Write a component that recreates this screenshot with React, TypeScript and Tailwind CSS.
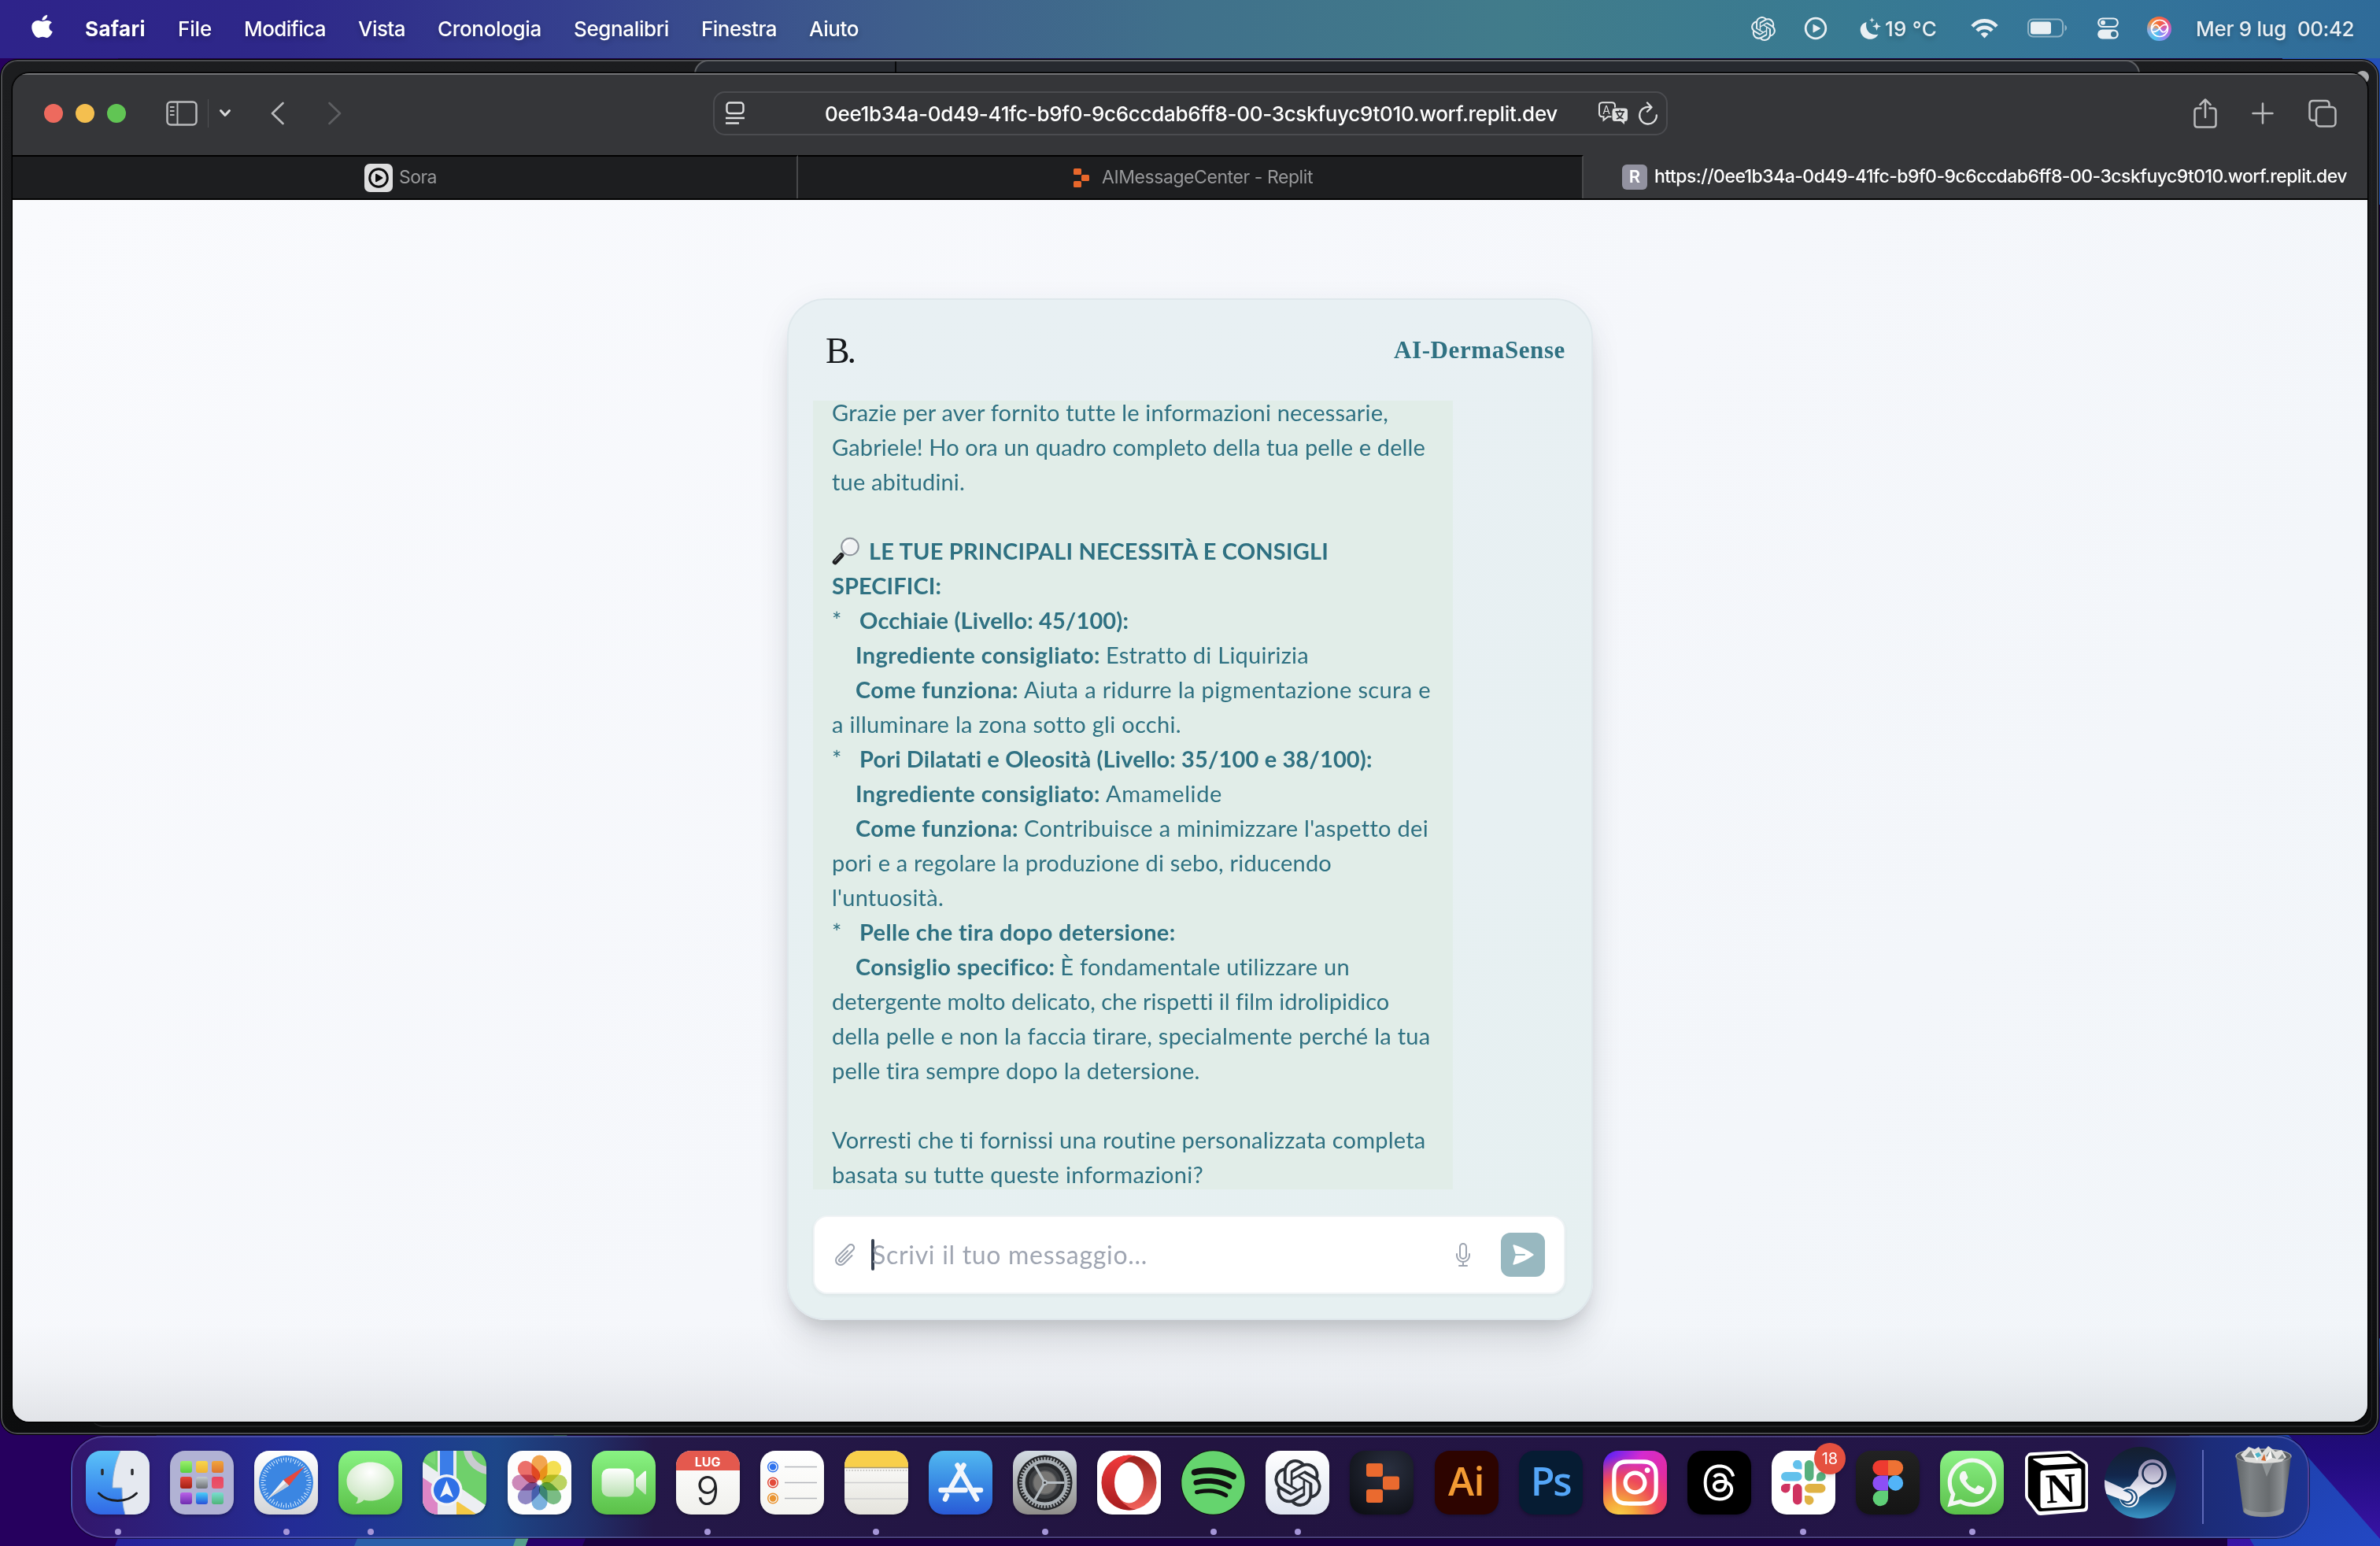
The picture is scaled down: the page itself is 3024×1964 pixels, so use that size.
import React, { useLayoutEffect, useRef, useState } from "react";
import { FaApple, FaInstagram, FaThreads, FaWhatsapp, FaSpotify } from "react-icons/fa6";
import { SiOpenai } from "react-icons/si";
import { HiOutlineMicrophone, HiOutlinePaperClip, HiPaperAirplane } from "react-icons/hi2";

/* Text whose tracking is adjusted so that it fills a given width. */
function Fit({ w, children, className = "" }: { w: number; children: string; className?: string }) {
  const ref = useRef<HTMLSpanElement>(null);
  const [spacing, setSpacing] = useState(0);
  useLayoutEffect(() => {
    const el = ref.current;
    if (!el) return;
    setSpacing((w - el.getBoundingClientRect().width) / children.length);
  }, [w, children]);
  return (
    <span ref={ref} className={`inline-block shrink-0 whitespace-pre ${className}`} style={{ letterSpacing: spacing }}>
      {children}
    </span>
  );
}

function Wallpaper() {
  return (
    <svg className="absolute inset-0" width="3024" height="1964" viewBox="0 0 3024 1964">
      <defs>
        <linearGradient id="wpL" x1="0" x2="1">
          <stop offset="0" stopColor="#27209a" />
          <stop offset="0.55" stopColor="#2438a0" />
          <stop offset="1" stopColor="#2a5faa" />
        </linearGradient>
        <linearGradient id="wpR" x1="0" y1="0" x2="1" y2="1">
          <stop offset="0" stopColor="#1c3da0" />
          <stop offset="1" stopColor="#2348c4" />
        </linearGradient>
        <linearGradient id="wpP" x1="0" y1="0" x2="0" y2="1">
          <stop offset="0" stopColor="#2450c0" />
          <stop offset="0.2" stopColor="#1a0a5c" />
          <stop offset="0.6" stopColor="#220c80" />
          <stop offset="1" stopColor="#3a14a8" />
        </linearGradient>
      </defs>
      <rect width="3024" height="1964" fill="#1a0140" />
      <rect width="150" height="1964" fill="#26005e" />
      <rect x="2900" y="60" width="124" height="200" fill="#2450b8" />
      <polygon points="200,1820 146,1964 660,1964 720,1820" fill="url(#wpL)" />
      <polygon points="510,1820 450,1964 660,1964 720,1820" fill="#2a5faa" />
      <polygon points="705,1820 652,1964 668,1964 722,1820" fill="#56a08c" />
      <polygon points="722,1820 668,1964 740,1964 800,1820" fill="#28006a" />
      <polygon points="2830,1820 3024,1700 3024,1964 2830,1964" fill="url(#wpP)" />
      <polygon points="2780,1820 2905,1820 3024,1955 3024,1964 2864,1964" fill="url(#wpR)" />
    </svg>
  );
}

function MenuBar() {
  return (
    <header className="relative flex h-[74px] items-center justify-between bg-[linear-gradient(90deg,#2e238a_0%,#2e2889_12%,#35408e_24%,#3f5f8c_38%,#40718b_50%,#417c8b_64%,#387a92_78%,#34759a_88%,#2f6b99_100%)] pb-0.5 pr-[33px] pl-[40px] text-[26px] font-medium text-white [text-shadow:0_3px_6px_rgba(0,0,0,0.25)]">
      <div className="flex items-center gap-[41px]">
        <FaApple className="-mt-1.5 h-[33px] w-[27px]" preserveAspectRatio="none" />
        <Fit w={77} className="font-bold">Safari</Fit>
        <Fit w={43}>File</Fit>
        <Fit w={104}>Modifica</Fit>
        <Fit w={60}>Vista</Fit>
        <Fit w={132}>Cronologia</Fit>
        <Fit w={121}>Segnalibri</Fit>
        <Fit w={96}>Finestra</Fit>
        <Fit w={63}>Aiuto</Fit>
      </div>
      <div className="flex items-center text-[#e9eff3]">
        <SiOpenai className="mr-[36px] size-[31px]" />
        <svg className="mr-[41px] size-[30px]" viewBox="0 0 30 30">
          <circle cx="15" cy="15" r="12.8" fill="none" stroke="currentColor" strokeWidth="2.8" />
          <path d="M11.5 10.2v9.6q0 .9.9.5l8.2-4.6q.8-.6 0-1.2l-8.2-4.6q-.9-.6-.9.3z" fill="currentColor" />
        </svg>
        <svg className="mr-[4px] h-[30px] w-[28px]" viewBox="0 0 28 30" fill="currentColor">
          <path d="M8.5 7C2 9 0 14 1 19c1.500 7 8 11 15 9.500 4-1 6-3 7.500-6C14 25 6 18 8.500 7z" />
          <path d="M15.500 1l.8 2.700 2.700.8-2.700.8-.8 2.700-.8-2.700-2.700-.8 2.700-.8zM21.500 7l1.400 4 4.100 1.400-4.100 1.400-1.400 4.200-1.400-4.200-4.100-1.400 4.100-1.400z" />
        </svg>
        <Fit w={66}>19 °C</Fit>
        <svg className="ml-[43px] h-[27px] w-[35px]" viewBox="0 0 35 27" fill="none" stroke="currentColor" strokeWidth="4.600">
          <path d="M2 10.500C10.500 1 24.500 1 33 10.500" />
          <path d="M8 16c5-5.500 14-5.500 19 0" />
          <path d="M17.500 25.500l-4.800-5.200c2.500-2.600 7.100-2.600 9.600 0z" fill="currentColor" stroke="none" />
        </svg>
        <svg className="ml-[37px] h-[26px] w-[52px]" viewBox="0 0 52 26">
          <rect x="1" y="1.500" width="44" height="22" rx="6" fill="none" stroke="#e9eff3" strokeOpacity=".5" strokeWidth="2" />
          <rect x="4" y="4.500" width="26" height="16" rx="3" fill="#e9eff3" />
          <path d="M47.500 8.500v8c3.500-1.500 3.500-6.500 0-8z" fill="#e9eff3" fillOpacity=".5" />
        </svg>
        <svg className="ml-[37px] h-[28px] w-[27px]" viewBox="0 0 27 28">
          <rect x="1.200" y="1.500" width="24.600" height="10.500" rx="5.250" fill="none" stroke="#e9eff3" strokeWidth="2.200" />
          <circle cx="7" cy="6.800" r="3" fill="#e9eff3" />
          <rect x="0.200" y="15.500" width="26.600" height="12" rx="6" fill="#e9eff3" />
          <circle cx="20.700" cy="21.500" r="3.700" fill="#3a7391" />
        </svg>
        <div className="ml-[36px] flex size-[31px] items-center justify-center rounded-full bg-[conic-gradient(#f4673c,#ee5577,#b668dc,#8c8cf5,#4cc4ee,#8ab0e8,#f08f46,#f4673c)]">
          <svg className="size-[26px]" viewBox="0 0 26 26" fill="none" stroke="#fff" strokeWidth="1.700">
            <circle cx="13" cy="13" r="10.500" />
            <path d="M3 14c3-7 7-7 10-1s7 7 10-1M4 17c3 1 7-1 9-4s6-6 9-4" />
          </svg>
        </div>
        <Fit w={115} className="ml-[31px]">Mer 9 lug</Fit>
        <Fit w={72} className="ml-[14px]">00:42</Fit>
      </div>
    </header>
  );
}

function Toolbar() {
  return (
    <div className="grid h-[102px] grid-cols-[890px_1fr_890px] items-center pb-[4px] text-[#b9babc]">
      <div className="flex items-center pl-[40px]">
        <div className="flex gap-4">
          <span className="size-6 rounded-full bg-[#ed6a5e]" />
          <span className="size-6 rounded-full bg-[#f4bf4f]" />
          <span className="size-6 rounded-full bg-[#61c554]" />
        </div>
        <svg className="ml-[51px] h-[32px] w-[40px]" viewBox="0 0 40 32" fill="none" stroke="currentColor" strokeWidth="2.500">
          <rect x="1.500" y="1.500" width="37" height="29" rx="4.500" />
          <path d="M14.500 1.500v29M5 8h5.500M5 13h5.500M5 18h5.500" strokeWidth="2" />
        </svg>
        <span className="ml-[13px] h-9 w-px bg-[#505154]" />
        <svg className="ml-[13px] h-[12px] w-[16px]" viewBox="0 0 16 12" fill="none" stroke="#d8d9da" strokeWidth="3" strokeLinecap="round" strokeLinejoin="round">
          <path d="M2.500 2.500L8 8.500l5.500-6" />
        </svg>
        <svg className="ml-[50px] h-[30px] w-[18px]" viewBox="0 0 18 30" fill="none" stroke="currentColor" strokeWidth="2.700" strokeLinecap="round" strokeLinejoin="round">
          <path d="M15.500 2L2 15l13.500 13" />
        </svg>
        <svg className="ml-[54px] h-[30px] w-[18px]" viewBox="0 0 18 30" fill="none" stroke="#5e5f62" strokeWidth="2.700" strokeLinecap="round" strokeLinejoin="round">
          <path d="M2.500 2L16 15 2.500 28" />
        </svg>
      </div>
      <div className="flex h-[56px] items-center rounded-[15px] border-2 border-[#4b4c50] pl-[14px] pr-[10px] text-[#dedfe0]">
        <svg className="h-[30px] w-[24px]" viewBox="0 0 24 30" fill="none" stroke="currentColor" strokeWidth="2.400">
          <rect x="1.500" y="1.500" width="21" height="13.500" rx="3.500" />
          <path d="M0 21h24M0 27.500h17" />
        </svg>
        <Fit w={931} className="ml-[102px] text-[26px] font-medium text-white">0ee1b34a-0d49-41fc-b9f0-9c6ccdab6ff8-00-3cskfuyc9t010.worf.replit.dev</Fit>
        <svg className="ml-[52px] h-[30px] w-[38px]" viewBox="0 0 38 30">
          <path d="M5 1.200h12q4 0 4 4v10q0 4-4 4h-5l-5.500 4.500v-4.500H5q-4 0-4-4v-10q0-4 4-4z" fill="none" stroke="currentColor" strokeWidth="2" />
          <text x="10" y="15.500" fontSize="14" textAnchor="middle" fill="currentColor" fontFamily="Inter, sans-serif">A</text>
          <path d="M21 8h12q4.500 0 4.500 4v9q0 4.500-4 4.500v4.500l-5-4.500H21q-4 0-4-4.500v-9Q17 8 21 8z" fill="currentColor" stroke="#353639" strokeWidth="1" />
          <path d="M21.500 13h11.500M27.200 10.500v2.500M23.500 14c1 4 4 7 8 8M31 14c-1 4-4 7-8 8" stroke="#353639" strokeWidth="1.800" fill="none" />
        </svg>
        <svg className="ml-[12px] h-[30px] w-[26px]" viewBox="0 0 26 30" fill="none" stroke="currentColor" strokeWidth="2.300" strokeLinecap="round" strokeLinejoin="round">
          <path d="M15.500 7.200A10.800 10.800 0 1 0 23.800 17.500" />
          <path d="M12 1.500l5.500 5.700-5.500 5.600" />
        </svg>
      </div>
      <div className="flex items-center justify-end pr-[40px]">
        <svg className="h-[38px] w-[30px]" viewBox="0 0 30 38" fill="none" stroke="currentColor" strokeWidth="2.500" strokeLinecap="round" strokeLinejoin="round">
          <path d="M9.500 12.500H5q-3.500 0-3.500 3.500v17q0 3.500 3.500 3.500h20q3.500 0 3.500-3.500V16q0-3.500-3.500-3.500h-4.500M15 24V2M8.500 8L15 1.500 21.500 8" />
        </svg>
        <svg className="ml-[44px] size-[28px]" viewBox="0 0 28 28" stroke="currentColor" strokeWidth="2.500" strokeLinecap="round">
          <path d="M14 1.500v25M1.500 14h25" />
        </svg>
        <svg className="ml-[44px] size-[36px]" viewBox="0 0 36 36" fill="none" stroke="currentColor" strokeWidth="2.500">
          <rect x="10" y="10" width="24.500" height="24.500" rx="4.500" />
          <path d="M10 27H6q-4.500 0-4.500-4.500v-16Q1.500 2 6 2h16q4.500 0 4.500 4.500V10" />
        </svg>
      </div>
    </div>
  );
}

function TabBar() {
  return (
    <div className="flex h-[57px] border-b-2 border-black text-[23px]">
      <div className="flex w-[998px] items-center justify-center border-t-2 border-r-2 border-t-black border-r-[#48494b] bg-[#1d1e20] pr-[10px] text-[#97989a]">
        <span className="mr-[8px] flex size-[36px] items-center justify-center rounded-[7px] bg-[#dededf]">
          <svg className="size-[26px]" viewBox="0 0 26 26">
            <circle cx="13" cy="13" r="11.300" fill="none" stroke="#0c0c0d" strokeWidth="3" />
            <path d="M9.800 8.500v9l7.800-4.500z" fill="#0c0c0d" stroke="#0c0c0d" strokeWidth="1.500" strokeLinejoin="round" />
          </svg>
        </span>
        <Fit w={48}>Sora</Fit>
      </div>
      <div className="flex w-[998px] items-center justify-center border-t-2 border-r-2 border-t-black border-r-[#48494b] bg-[#1d1e20] text-[#97989a]">
        <svg className="mr-[16px] ml-[8px] h-[24px] w-[20px]" viewBox="0 0 20 24" fill="#e8672b">
          <rect x="0" y="0" width="10" height="8" rx="1.500" />
          <rect x="10" y="8" width="10" height="8" rx="1.500" />
          <rect x="0" y="16" width="10" height="8" rx="1.500" />
        </svg>
        <Fit w={268}>AIMessageCenter - Replit</Fit>
      </div>
      <div className="flex flex-1 items-center bg-[#353639] pl-[49px] font-medium text-white">
        <span className="mr-[9px] flex size-8 items-center justify-center rounded-md bg-[#9292a0] text-[22px] font-semibold">R</span>
        <Fit w={880}>https://0ee1b34a-0d49-41fc-b9f0-9c6ccdab6ff8-00-3cskfuyc9t010.worf.replit.dev</Fit>
      </div>
    </div>
  );
}

type Part = [text: string, width: number];
type Row = { bullet?: boolean; indent?: boolean; glass?: boolean; bold?: Part; text?: Part };

const rows: Row[] = [
  { text: ["Grazie per aver fornito tutte le informazioni necessarie,", 706] },
  { text: ["Gabriele! Ho ora un quadro completo della tua pelle e delle", 754] },
  { text: ["tue abitudini.", 169] },
  {},
  { glass: true, bold: ["LE TUE PRINCIPALI NECESSITÀ E CONSIGLI", 584] },
  { bold: ["SPECIFICI:", 139] },
  { bullet: true, bold: ["Occhiaie (Livello: 45/100):", 342] },
  { indent: true, bold: ["Ingrediente consigliato:", 311], text: ["Estratto di Liquirizia", 257] },
  { indent: true, bold: ["Come funziona:", 207], text: ["Aiuta a ridurre la pigmentazione scura e", 517] },
  { text: ["a illuminare la zona sotto gli occhi.", 443] },
  { bullet: true, bold: ["Pori Dilatati e Oleosità (Livello: 35/100 e 38/100):", 652] },
  { indent: true, bold: ["Ingrediente consigliato:", 311], text: ["Amamelide", 148] },
  { indent: true, bold: ["Come funziona:", 207], text: ["Contribuisce a minimizzare l'aspetto dei", 513] },
  { text: ["pori e a regolare la produzione di sebo, riducendo", 635] },
  { text: ["l'untuosità.", 142] },
  { bullet: true, bold: ["Pelle che tira dopo detersione:", 402] },
  { indent: true, bold: ["Consiglio specifico:", 253], text: ["È fondamentale utilizzare un", 368] },
  { text: ["detergente molto delicato, che rispetti il film idrolipidico", 707] },
  { text: ["della pelle e non la faccia tirare, specialmente perché la tua", 761] },
  { text: ["pelle tira sempre dopo la detersione.", 468] },
  {},
  { text: ["Vorresti che ti fornissi una routine personalizzata completa", 756] },
  { text: ["basata su tutte queste informazioni?", 471] },
];

function Magnifier() {
  return (
    <svg className="mr-[11px] size-[36px]" viewBox="0 0 36 36">
      <path d="M15 21l-3.500 3.500" stroke="#8d9096" strokeWidth="3" />
      <path d="M12 23.500L4 32" stroke="#1d1e20" strokeWidth="6.500" strokeLinecap="round" />
      <path d="M10.500 23.500L4 30.500" stroke="#77797d" strokeWidth="1.500" strokeLinecap="round" />
      <circle cx="23" cy="12.500" r="10.800" fill="#f0f2f3" stroke="#8e949c" strokeWidth="2" />
      <path d="M15.500 11a8 8 0 0 1 7-6" stroke="#fff" strokeWidth="2" fill="none" />
    </svg>
  );
}

function ChatCard() {
  return (
    <section className="flex h-[1298px] w-[1024px] flex-col rounded-[48px] border-2 border-[#dfe8ec] bg-[linear-gradient(180deg,#e8f0f3,#e6f0f1)] pr-[32px] pl-[31px] shadow-[0_40px_50px_-10px_rgba(0,0,0,0.1),0_14px_20px_-8px_rgba(0,0,0,0.12),0_10px_40px_rgba(40,50,80,0.07)]">
      <div className="flex h-[128px] items-center justify-between pr-px pl-[16px]">
        <Fit w={36} className="font-['Liberation_Serif'] text-[46px] text-[#16191c]">B.</Fit>
        <Fit w={218} className="font-['Liberation_Serif'] text-[31px] font-bold text-[#2f7182]">AI-DermaSense</Fit>
      </div>
      <div className="h-[1002px] w-[813px] bg-[#e1ede8] pl-[24px] font-[Lato] text-[29px] leading-[44px] text-[#2f7182]">
        <div className="-mt-[7px] flex flex-col">
          {rows.map((r, i) => (
            <div key={i} className="flex h-11 items-center">
              {r.bullet && <span className="w-[35px]">*</span>}
              {r.indent && <span className="w-[30px]" />}
              {r.glass && <Magnifier />}
              {r.bold && <Fit w={r.bold[1]} className="mr-[7px] font-bold">{r.bold[0]}</Fit>}
              {r.text && <Fit w={r.text[1]}>{r.text[0]}</Fit>}
            </div>
          ))}
        </div>
      </div>
      <div className="mt-[33px] flex h-[100px] w-[956px] shrink-0 items-center rounded-[18px] border-2 border-[#eff3f5] bg-white pr-[24px] pl-[23px] text-[#9ca3af] shadow-[0_2px_4px_rgba(0,0,0,0.05)]">
        <HiOutlinePaperClip className="size-[32px]" />
        <span className="ml-[17px] h-10 w-[4px] rounded-sm bg-[#374151]" />
        <Fit w={350} className="-ml-[3px] font-[Lato] text-[32px] text-[#a0a6b2]">Scrivi il tuo messaggio...</Fit>
        <HiOutlineMicrophone className="ml-auto size-[32px]" />
        <span className="ml-[32px] flex size-14 items-center justify-center rounded-xl bg-[#98b8c0]">
          <HiPaperAirplane className="size-[32px] text-white" />
        </span>
      </div>
    </section>
  );
}

function SafariWindow() {
  return (
    <div className="absolute top-[92px] left-[15px] flex h-[1715px] w-[2994px] flex-col overflow-hidden rounded-[22px] border border-black bg-[#353639] shadow-[0_0_0_1px_rgba(0,0,0,0.5)]">
      <div className="h-[2px] shrink-0 bg-[#747577]" />
      <Toolbar />
      <TabBar />
      <main className="flex flex-1 justify-center bg-[linear-gradient(180deg,rgba(60,65,75,0)_92%,rgba(60,65,75,0.04)_96%,rgba(60,65,75,0.11)_100%),linear-gradient(135deg,#f9fafd_0%,#f5f7fb_50%,#f1f5f9_100%)] pt-[125px]">
        <ChatCard />
      </main>
    </div>
  );
}

function BackWindows() {
  return (
    <div className="absolute top-[75px] left-0 h-[1748px] w-[3023px] overflow-hidden rounded-[22px] border border-black bg-[linear-gradient(180deg,#1c1d1f_0%,#18191b_60%,#0c0d0e_100%)]">
      <div className="absolute inset-0 rounded-[21px] border-2 border-[#4a4b4e]" />
      <div className="absolute top-[80px] right-[8px] bottom-[9px] left-[114px] rounded-[16px] border-r border-b-2 border-[#222325]" />
      <div className="absolute top-[14px] right-[12px] size-[16px] rounded-full bg-[#aaabad]" />
      <div className="absolute top-0 left-[881px] h-[30px] w-[1837px] rounded-t-[18px] border-2 border-[#5e6064] bg-[#272a30]">
        <div className="ml-[253px] h-full w-[2px] bg-[#08090a]" />
      </div>
    </div>
  );
}

/* ---- Dock ---- */

function Tile({ className = "", children }: { className?: string; children?: React.ReactNode }) {
  return (
    <div className={`relative flex size-[81px] items-center justify-center overflow-hidden rounded-[19px] shadow-[0_2px_4px_rgba(0,0,0,0.3)] ${className}`}>
      {children}
    </div>
  );
}

function Art({ children }: { children: React.ReactNode }) {
  return <svg className="size-full" viewBox="0 0 81 81">{children}</svg>;
}

const padColors = [
  "bg-linear-to-b from-[#9af06c] to-[#56cf3b]",
  "bg-linear-to-b from-[#f7d64d] to-[#efb132]",
  "bg-linear-to-b from-[#f0a53c] to-[#dc7430]",
  "bg-linear-to-b from-[#e6463a] to-[#a31f12]",
  "bg-linear-to-b from-[#c4cdd2] to-[#6d7074]",
  "bg-linear-to-b from-[#ea4562] to-[#e8566a]",
  "bg-linear-to-b from-[#ba62e8] to-[#6f2bb0]",
  "bg-linear-to-b from-[#4ccdf8] to-[#2b4fd8]",
  "bg-linear-to-b from-[#79dcd0] to-[#4fb579]",
];

const petals = ["#f39a37", "#f5dd3a", "#b4cf4c", "#69b574", "#6aa8dc", "#8278be", "#c779b0", "#ea5c56"];
const ticks = Array.from({ length: 60 }, (_, i) => i * 6);
const teeth = Array.from({ length: 48 }, (_, i) => i * 7.5);

const Finder = () => (
  <Tile className="bg-linear-to-b from-[#5cc3f8] to-[#3268e6]">
    <Art>
      <path d="M44 0C37 16 34 32 34 47h12c0 12 1 24 4 34h31V0z" fill="#e5e9f0" />
      <path d="M44 0C37 16 34 32 34 47h12c0 12 1 24 4 34" fill="none" stroke="#9eb5cf" strokeWidth="1" />
      <path d="M21 24.500v5M59 24.500v5" stroke="#2a2c30" strokeWidth="3.500" strokeLinecap="round" />
      <path d="M16.500 54c12 12.500 36 12.500 48 0" fill="none" stroke="#1c1e22" strokeWidth="3" strokeLinecap="round" />
    </Art>
  </Tile>
);

const Launchpad = () => (
  <Tile className="bg-[#b1b2d4]">
    <div className="grid grid-cols-3 gap-[5px]">
      {padColors.map((c) => <span key={c} className={`size-[15px] rounded-[3px] ${c}`} />)}
    </div>
  </Tile>
);

const SafariIcon = () => (
  <Tile className="bg-linear-to-b from-white to-[#d5d6d8]">
    <Art>
      <circle cx="40.500" cy="40.500" r="34.500" fill="#3b86e2" />
      {ticks.map((a, i) => (
        <path key={a} d={i % 2 ? "M40.500 8.500v3.500" : "M40.500 8.500v6"} stroke="#d8eafb" strokeWidth="1" transform={`rotate(${a} 40.500 40.500)`} />
      ))}
      <path d="M64 20L37 37l7 7.500z" fill="#e5483d" />
      <path d="M17 61L37 37l7 7.500z" fill="#f1f2f4" />
      <path d="M17 61L40.500 40.700l3.500 3.800z" fill="#c7cad0" />
    </Art>
  </Tile>
);

const Messages = () => (
  <Tile className="bg-linear-to-b from-[#89f383] to-[#5bc048]">
    <Art>
      <defs>
        <radialGradient id="bub" cx=".5" cy=".25" r=".8"><stop offset="0" stopColor="#fff" /><stop offset="1" stopColor="#c3e2b8" /></radialGradient>
      </defs>
      <path d="M40.500 14.500c17 0 30 10.500 30 24.500s-13 24.500-30 24.500c-3 0-5.500-.3-8-1-2.500 2.500-6 4.500-10.500 4.500 2-2.500 3-5 2.500-7.500C16 55 10.500 48 10.500 39c0-14 13-24.500 30-24.500z" fill="url(#bub)" />
    </Art>
  </Tile>
);

const Maps = () => (
  <Tile className="bg-[#6fd06b]">
    <Art>
      <path d="M0 14l81 56v11H0z" fill="#eceef2" />
      <path d="M0 34l22 15v32H0z" fill="#dd86c6" />
      <path d="M42 63l27 18H42z" fill="#f3c845" />
      <path d="M19 0h24v81H19z" fill="#e9ebef" />
      <path d="M22 0h17v40H22z" fill="#3b7de8" />
      <path d="M52 0c2 14 12 26 29 30V20C70 17 63 9 62 0z" fill="#c9cbd0" />
      <path d="M0 0h16v18L0 8z" fill="#7ad774" />
      <circle cx="30.500" cy="50" r="20" fill="#f2f3f6" />
      <circle cx="30.500" cy="50" r="16.500" fill="#2f70e6" />
      <path d="M30.500 38l8.500 21.500-8.500-5-8.500 5z" fill="#f4f6fa" />
    </Art>
  </Tile>
);

const Photos = () => (
  <Tile className="bg-[#fdfdfd]">
    <Art>
      {petals.map((c, i) => (
        <rect key={c} x="30.500" y="5.500" width="20" height="32" rx="10" fill={c} fillOpacity=".88" className="mix-blend-multiply" transform={`rotate(${i * 45} 40.500 40.500)`} />
      ))}
    </Art>
  </Tile>
);

const FaceTime = () => (
  <Tile className="bg-linear-to-b from-[#89f383] to-[#5bc048]">
    <Art>
      <defs><linearGradient id="ft" x2="0" y2="1"><stop offset="0" stopColor="#fff" /><stop offset="1" stopColor="#b9e0b1" /></linearGradient></defs>
      <rect x="12.500" y="22.500" width="41" height="36" rx="9" fill="url(#ft)" />
      <path d="M56 36l11-10q2-1.500 2 1v27q0 2.500-2 1L56 45z" fill="url(#ft)" />
    </Art>
  </Tile>
);

const Calendar = () => (
  <Tile className="flex-col justify-start bg-linear-to-b from-white to-[#f0f0ec]">
    <div className="flex h-[25px] w-full items-center justify-center bg-[#e4594e] pt-0.5 text-[16px] font-bold text-white">LUG</div>
    <div className="mt-[1px] font-[Inter] text-[50px] leading-[50px] font-light text-[#232427]">9</div>
  </Tile>
);

const Reminders = () => (
  <Tile className="bg-linear-to-b from-white to-[#f4f4f0]">
    <Art>
      {["#2f73ee", "#e34a3a", "#ea9430"].map((c, i) => (
        <g key={c} transform={`translate(0 ${i * 20})`}>
          <circle cx="16" cy="20.500" r="6.300" fill="none" stroke={c} strokeWidth="1.500" />
          <circle cx="16" cy="20.500" r="4.200" fill={c} />
          <path d="M31 20.500h41" stroke="#b4b6bb" strokeWidth="1.700" />
        </g>
      ))}
    </Art>
  </Tile>
);

const Notes = () => (
  <Tile className="bg-linear-to-b from-white to-[#e4e3dc]">
    <Art>
      <rect width="81" height="21" fill="#f8cf4b" />
      <path d="M0 21.500h81" stroke="#a99a72" strokeWidth="1.500" />
      <path d="M2 25h78" stroke="#b9b8b4" strokeWidth="1.600" strokeDasharray="1.600 2" />
      <path d="M0 40.500h81M0 61h81" stroke="#cfcfd0" strokeWidth="1.500" />
    </Art>
  </Tile>
);

const AppStore = () => (
  <Tile className="bg-linear-to-b from-[#53b9f0] to-[#2a59d6]">
    <Art>
      <g stroke="#f2f6fb" strokeWidth="6.500" strokeLinecap="round">
        <path d="M36.500 18.500l24.500 43M44.500 18.500L28.500 46.500M23 57l-2 4.500M15.500 50h31M58 50h8" />
      </g>
    </Art>
  </Tile>
);

const Settings = () => (
  <Tile className="bg-linear-to-b from-[#d3dce3] to-[#8f8d8a]">
    <Art>
      <circle cx="40.500" cy="40.500" r="35" fill="#26282b" />
      {teeth.map((a) => <path key={a} d="M40.500 8v5" stroke="#a9adb1" strokeWidth="2" transform={`rotate(${a} 40.500 40.500)`} />)}
      <circle cx="40.500" cy="40.500" r="27" fill="none" stroke="#a9b0b5" strokeWidth="4" />
      <circle cx="40.500" cy="40.500" r="18" fill="#5c5d5e" stroke="#3d3f42" strokeWidth="5" />
      <circle cx="40.500" cy="40.500" r="14" fill="#777674" />
      {[0, 120, 240].map((a) => <path key={a} d="M40.500 40.500h25" stroke="#b7bec3" strokeWidth="3.200" transform={`rotate(${a} 40.500 40.500)`} />)}
      <circle cx="40.500" cy="40.500" r="3.500" fill="#b7bec3" />
      <circle cx="40.500" cy="40.500" r="1.500" fill="#333" />
    </Art>
  </Tile>
);

const OperaIcon = () => (
  <Tile className="bg-white">
    <Art>
      <defs>
        <linearGradient id="opA" x2="0" y2="1"><stop offset="0" stopColor="#f23a3c" /><stop offset="1" stopColor="#a51c1e" /></linearGradient>
        <linearGradient id="opB" x2="0" y2="1"><stop offset="0" stopColor="#98201b" /><stop offset="1" stopColor="#f4635c" /></linearGradient>
      </defs>
      <circle cx="40.500" cy="40.500" r="35" fill="url(#opB)" />
      <path d="M40.500 5.500a35 35 0 1 0 12 68c-6 2-12-1-15-4-10-6-14-17-14-29s4-23 14-29c4-4 9-5 14-3.500-3.500-1.600-7-2.500-11-2.500z" fill="url(#opA)" />
      <ellipse cx="40.500" cy="40.500" rx="18.500" ry="26" fill="#fff" />
    </Art>
  </Tile>
);

const SpotifyIcon = () => (
  <div className="flex size-[83px] items-center justify-center rounded-full bg-[#111]">
    <FaSpotify className="size-[83px] text-[#65d46e]" />
  </div>
);

const ChatGPT = () => (
  <Tile className="bg-linear-to-b from-white to-[#dfe5f0]">
    <SiOpenai className="size-[60px] text-[#2b2f36]" />
  </Tile>
);

const ReplitIcon = () => (
  <Tile className="bg-[radial-gradient(circle_at_60%_30%,#2a3040,#0e1016_85%)]">
    <Art>
      <g fill="#ea6a2f">
        <rect x="21" y="16" width="21" height="17" rx="3" />
        <rect x="42" y="32.500" width="21" height="17" rx="3" />
        <rect x="21" y="49" width="21" height="17" rx="3" />
      </g>
    </Art>
  </Tile>
);

const Illustrator = () => (
  <Tile className="bg-[#2d0400]"><Fit w={46} className="-mt-1 font-['Open_Sans'] text-[50px] font-semibold text-[#f39b33]">Ai</Fit></Tile>
);
const Photoshop = () => (
  <Tile className="bg-[#061c33]"><Fit w={51} className="-mt-1 font-['Open_Sans'] text-[50px] font-semibold text-[#54a6f8]">Ps</Fit></Tile>
);

const InstagramIcon = () => (
  <Tile className="bg-[radial-gradient(circle_at_25%_105%,#f9d548_0%,#f5a83c_20%,#ee4a5a_48%,transparent_75%),linear-gradient(125deg,#5a22f5_5%,#d42bd0_38%,#ec2c7c_100%)]">
    <FaInstagram className="size-[67px] text-white" />
  </Tile>
);

const ThreadsIcon = () => (
  <Tile className="bg-black"><FaThreads className="size-[49px] text-white" /></Tile>
);

const SlackIcon = () => (
  <div className="relative">
    <Tile className="bg-white">
      <svg className="size-[57px]" viewBox="0 0 57 57">
        <g fill="#63c1ec"><rect x="0" y="15" width="26.500" height="11.500" rx="5.750" /><path d="M26.500 11.500v-6a5.750 5.750 0 0 0-11.500 0 6 6 0 0 0 6 6z" /></g>
        <g fill="#56b07e"><rect x="30" y="0" width="11.500" height="26.500" rx="5.750" /><path d="M45 26.500h6a5.750 5.750 0 0 0 0-11.500 6 6 0 0 0-6 6z" /></g>
        <g fill="#e0b244"><rect x="30" y="30" width="26.500" height="11.500" rx="5.750" /><path d="M30 45v6a5.750 5.750 0 0 0 11.500 0 6 6 0 0 0-6-6z" /></g>
        <g fill="#cf3360"><rect x="15" y="30" width="11.500" height="26.500" rx="5.750" /><path d="M11.500 30h-6a5.750 5.750 0 0 0 0 11.500 6 6 0 0 0 6-6z" /></g>
      </svg>
    </Tile>
    <span className="absolute -top-[10px] -right-[13px] flex size-10 items-center justify-center rounded-full bg-[#e5503f] text-[20px] text-white shadow-md">18</span>
  </div>
);

const FigmaIcon = () => (
  <Tile className="bg-linear-to-b from-[#222] to-[#141414]">
    <Art>
      <path d="M41 12H31a9.700 9.700 0 0 0 0 19.400h10z" fill="#ee3b30" />
      <path d="M41 12h9.500a9.700 9.700 0 0 1 0 19.400H41z" fill="#ee7234" />
      <path d="M41 31.400H31a9.700 9.700 0 0 0 0 19.400h10z" fill="#8c4ff5" />
      <circle cx="50.500" cy="41" r="9.700" fill="#52b4f8" />
      <path d="M41 50.800H31A9.700 9.700 0 1 0 41 60.500z" fill="#5fcf77" />
    </Art>
  </Tile>
);

const WhatsAppIcon = () => (
  <Tile className="bg-linear-to-b from-[#8cf286] to-[#5abf49]"><FaWhatsapp className="size-[71px] text-[#f4f7f4]" /></Tile>
);

const NotionIcon = () => (
  <svg className="size-[84px]" viewBox="0 0 84 84">
    <path d="M5 6q1-2.500 4-2.700L57 1q3-.3 5.500 1.500L79 14q3 2 3 5v54q0 5-5 5.500L22 83q-3.500.2-5.500-2.500L4 64q-2-2.500-2-6V12q0-4 3-6z" fill="#fff" />
    <path d="M8 7.500L57 4.500q2-.2 4 1.200L77 17q1.500 1 1.500 3v51q0 3.300-3.300 3.500L22 78q-2.500.1-3.700-1.500L7 61.500q-1.200-1.700-1.200-4V11q0-3 2.200-3.500z" fill="#000" />
    <path d="M13 11l42-2.500q2-.1 3.500 1l10 6.500q1 1-.5 1.200L27 19.500q-2 .1-3.500-1L12.500 12.500q-1-1.200.5-1.500z" fill="#fff" />
    <path d="M24.500 26l46-2.800q3-.2 3 2.800v42q0 3-3 3.200l-46 2.700q-3 .2-3-2.800V29q0-2.800 3-3z" fill="#fff" />
    <text x="47.500" y="66.500" fontSize="53" fontWeight="700" textAnchor="middle" fontFamily="Liberation Serif, serif" transform="rotate(-3 47 48)">N</text>
  </svg>
);

const SteamIcon = () => (
  <svg className="size-[91px] shrink-0" viewBox="0 0 91 91">
    <defs>
      <linearGradient id="st" x2="0" y2="1"><stop offset="0" stopColor="#141f2e" /><stop offset=".4" stopColor="#12264c" /><stop offset=".75" stopColor="#1c5c8e" /><stop offset="1" stopColor="#3c96c6" /></linearGradient>
      <linearGradient id="arm" x2="0" y2="1"><stop offset="0" stopColor="#8d85aa" /><stop offset=".6" stopColor="#e6e6f0" /><stop offset="1" stopColor="#fff" /></linearGradient>
      <clipPath id="stc"><circle cx="45.500" cy="45.500" r="45.500" /></clipPath>
    </defs>
    <g clipPath="url(#stc)">
      <rect width="91" height="91" fill="url(#st)" />
      <path d="M0 42l24 11c3-2 5-2.500 8-2.300L43 37v-4a18 18 0 1 1 18 19l-17 12c0 17-23 17-25 2L0 59z" fill="url(#arm)" />
      <circle cx="61" cy="34" r="12.500" fill="none" stroke="#182a4e" strokeWidth="2.500" />
      <path d="M26 55.500l5.500 2.300a6.500 6.500 0 0 1-5 12L21.500 68a10 10 0 1 0 4.500-12.500z" fill="none" stroke="#1b4d7c" strokeWidth="2.200" />
    </g>
  </svg>
);

const Trash = () => (
  <svg className="h-[94px] w-[72px]" viewBox="0 0 72 94">
    <defs>
      <linearGradient id="tr"><stop offset="0" stopColor="#5f6467" /><stop offset=".25" stopColor="#7e8386" /><stop offset=".6" stopColor="#686c6f" /><stop offset=".85" stopColor="#8d9194" /><stop offset="1" stopColor="#505457" /></linearGradient>
    </defs>
    <ellipse cx="36" cy="15" rx="35" ry="9" fill="#5a5e61" stroke="#a3a7a9" strokeWidth="1.500" />
    <path d="M7 13L17 3l8 3 5-3 4 8 8-9 9 7 8-2 6 9-9 9-20 3-20-2z" fill="#dfdfdd" />
    <path d="M12 16l8-9 5 10zM39 15l6-8 7 11zM54 19l6-7 3 6z" fill="#88908f" />
    <path d="M21 9l9 5-2 7zM45 6l2 11-8 4z" fill="#fbfbfa" />
    <path d="M25 12l5-2 3 4-5 3z" fill="#4bb4c8" />
    <path d="M33 20l4-8 2 9z" fill="#d26b35" />
    <path d="M1 15c3 12 67 12 70 0l-9 69c-1 11-51 11-52 0z" fill="url(#tr)" />
    <path d="M12 80c6 8 42 8 48 0l1 5c-3 9-47 9-50 0z" fill="#a5a9ab" fillOpacity=".5" />
    <path d="M34 24l14-1-8 18z" fill="#a7abad" fillOpacity=".6" />
  </svg>
);

const dockApps: { Icon: () => React.ReactElement; open?: boolean }[] = [
  { Icon: Finder, open: true },
  { Icon: Launchpad },
  { Icon: SafariIcon, open: true },
  { Icon: Messages, open: true },
  { Icon: Maps },
  { Icon: Photos },
  { Icon: FaceTime },
  { Icon: Calendar, open: true },
  { Icon: Reminders },
  { Icon: Notes, open: true },
  { Icon: AppStore },
  { Icon: Settings, open: true },
  { Icon: OperaIcon },
  { Icon: SpotifyIcon, open: true },
  { Icon: ChatGPT, open: true },
  { Icon: ReplitIcon },
  { Icon: Illustrator },
  { Icon: Photoshop },
  { Icon: InstagramIcon },
  { Icon: ThreadsIcon },
  { Icon: SlackIcon, open: true },
  { Icon: FigmaIcon },
  { Icon: WhatsAppIcon, open: true },
  { Icon: NotionIcon },
  { Icon: SteamIcon },
];

function Dock() {
  return (
    <nav className="absolute top-[1824px] left-[90px] flex h-[130px] w-[2844px] rounded-[42px] border-2 border-[#8c8cdc]/35 bg-[linear-gradient(90deg,#33166c_0%,#2b2380_5%,#232c96_10%,#1f3a90_15%,#1d4688_19%,#212f6a_23%,#241848_26%,#221440_50%,#24164a_92%,#1c2c78_95.500%,#1d3390_100%)] pl-[4px] shadow-[0_0_0_1px_rgba(0,0,0,0.5)]">
      {dockApps.map(({ Icon, open }, i) => (
        <div key={i} className="flex w-[107.100px] flex-col items-center">
          <div className="flex h-[115px] items-center justify-center">
            <Icon />
          </div>
          {open && <span className="mt-px size-2 rounded-full bg-[#a596d8]" />}
        </div>
      ))}
      <span className="mt-[16px] ml-[25px] h-[94px] w-[2px] bg-[#5d68b8]" />
      <div className="mt-[9px] ml-[40px]">
        <Trash />
      </div>
    </nav>
  );
}

export default function App() {
  return (
    <div className="relative h-[1964px] w-[3024px] overflow-hidden bg-[#1a0140] font-[Inter]">
      <Wallpaper />
      <MenuBar />
      <BackWindows />
      <SafariWindow />
      <Dock />
    </div>
  );
}
